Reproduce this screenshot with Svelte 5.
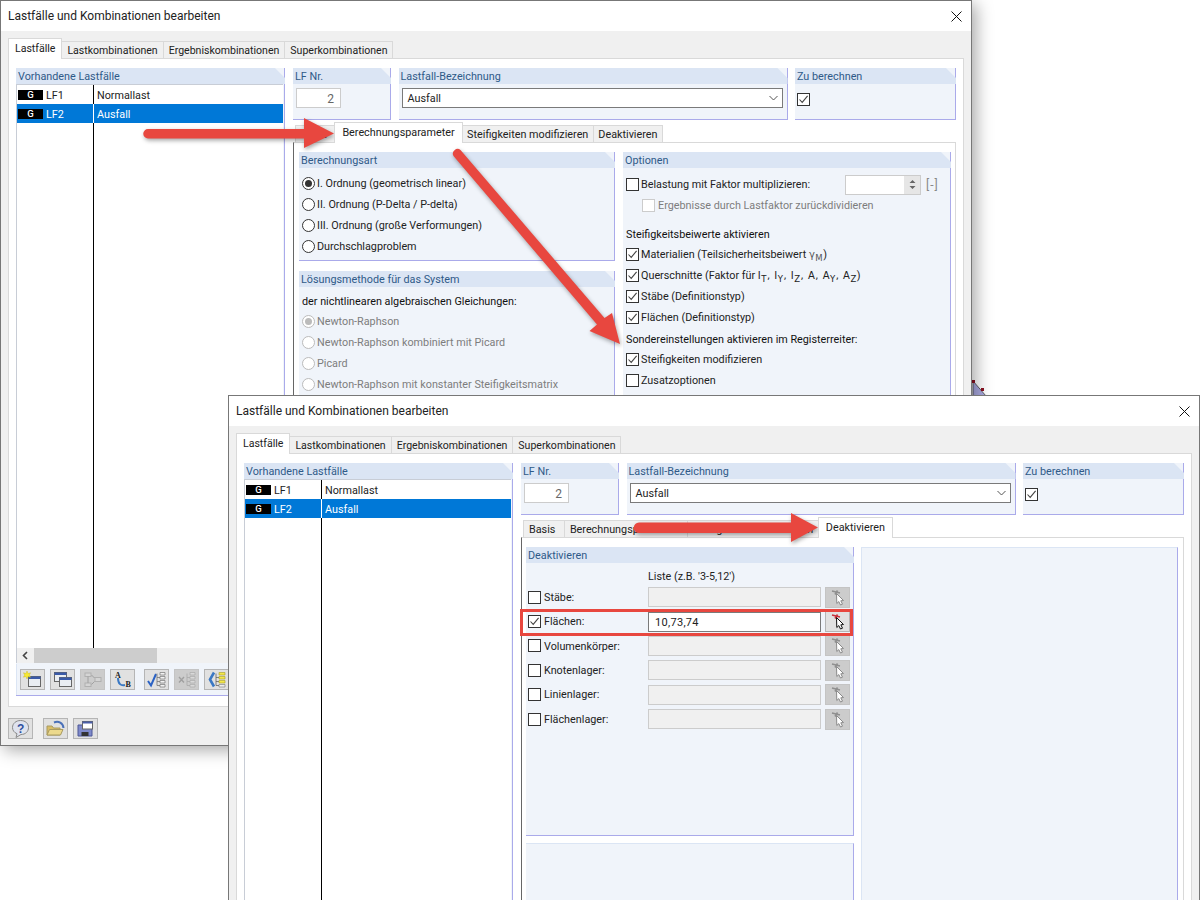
<script>
  const mainTabs = ['Lastfälle', 'Lastkombinationen', 'Ergebniskombinationen', 'Superkombinationen'];
  const subTabs = ['Basis', 'Berechnungsparameter', 'Steifigkeiten modifizieren', 'Deaktivieren'];
  const cases = [
    { id: 'LF1', name: 'Normallast', selected: false },
    { id: 'LF2', name: 'Ausfall', selected: true }
  ];
  const methods = ['I. Ordnung (geometrisch linear)', 'II. Ordnung (P-Delta / P-delta)', 'III. Ordnung (große Verformungen)', 'Durchschlagproblem'];
  const solvers = ['Newton-Raphson', 'Newton-Raphson kombiniert mit Picard', 'Picard', 'Newton-Raphson mit konstanter Steifigkeitsmatrix'];
  const deactivate = [
    { label: 'Stäbe:', on: false, value: '' },
    { label: 'Flächen:', on: true, value: '10,73,74' },
    { label: 'Volumenkörper:', on: false, value: '' },
    { label: 'Knotenlager:', on: false, value: '' },
    { label: 'Linienlager:', on: false, value: '' },
    { label: 'Flächenlager:', on: false, value: '' }
  ];
  const tools = [
    { icon: 'new' }, { icon: 'copy' }, { icon: 'flow', off: true }, { icon: 'ab' },
    { icon: 'check', gap: true }, { icon: 'cross', off: true }, { icon: 'bracket' }
  ];
  const footer = [{ icon: 'help' }, { icon: 'open', gap: true }, { icon: 'save' }];
</script>

{#snippet chk(on, off = false)}
  <span class="chk" class:off>
    {#if on}<svg viewBox="0 0 13 13" width="13" height="13"><path d="M2.5 6.5 5.2 9.4 10.6 2.8" fill="none" stroke="#444" stroke-width="1.1"/></svg>{/if}
  </span>
{/snippet}

{#snippet radio(on, off = false)}
  <span class="radio" class:off class:on></span>
{/snippet}

{#snippet icon(name)}
  <svg viewBox="0 0 25 21" width="25" height="21">
    {#if name === 'new'}
      <rect x="8.500" y="7.500" width="12" height="10" fill="#e9edf2" stroke="#666"/>
      <rect x="8.500" y="7.500" width="12" height="2.500" fill="#3a5aa8"/>
      <path d="M7 2 8 4.500 10.600 3.800 9.300 6 10.600 8.200 8 7.500 7 10 6 7.500 3.400 8.200 4.700 6 3.400 3.800 6 4.500Z" fill="#f7e92c" stroke="#c4b422" stroke-width=".4"/>
    {:else if name === 'copy'}
      <rect x="4.500" y="3.500" width="12" height="9" fill="#e9edf2" stroke="#666"/>
      <rect x="4.500" y="3.500" width="12" height="2.500" fill="#3a5aa8"/>
      <rect x="9.500" y="8.500" width="12" height="9" fill="#e9edf2" stroke="#666"/>
      <rect x="9.500" y="8.500" width="12" height="2.500" fill="#3a5aa8"/>
    {:else if name === 'flow'}
      <g fill="#d4d4d4" stroke="#b0b0b0">
        <rect x="5" y="4" width="6" height="3.500"/><rect x="5" y="14" width="6" height="3.500"/><rect x="15" y="8.500" width="6" height="4"/>
      </g>
      <path d="M8 7.500v6.500M11.500 6l3 3M11.500 15.500l3-3" stroke="#a0a0a0" fill="none"/>
    {:else if name === 'ab'}
      <text x="5" y="9" class="ico-t">A</text>
      <path d="M8 9c0 6 3 8 7 7" fill="none" stroke="#3a78c4" stroke-width="2"/>
      <text x="15.500" y="18" class="ico-t">B</text>
    {:else if name === 'check'}
      <path d="M4 12 7 16.500 12 5" fill="none" stroke="#2b62c4" stroke-width="2"/>
      <path d="M13 4.500v12h3M13 8.500h3M13 12.500h3" fill="none" stroke="#777" stroke-width=".8"/>
      <path d="M16 3.500h5v2.500h-5zM16 7.500h5v2.500h-5zM16 11.500h5v2.500h-5zM16 15.500h5v2.500h-5z" fill="#f3f3f3" stroke="#777" stroke-width=".7"/>
    {:else if name === 'cross'}
      <path d="M5 8 10 13.500M10 8 5 13.500" stroke="#a0a0a0" stroke-width="1.400"/>
      <path d="M13 4.500v12h3M13 8.500h3M13 12.500h3" fill="none" stroke="#aaa" stroke-width=".8"/>
      <path d="M16 3.500h5v2.500h-5zM16 7.500h5v2.500h-5zM16 11.500h5v2.500h-5zM16 15.500h5v2.500h-5z" fill="#d9d9d9" stroke="#aaa" stroke-width=".7"/>
    {:else if name === 'bracket'}
      <path d="M10 3.500 6 10.500 10 17.500" fill="none" stroke="#3a78c4" stroke-width="2.600"/>
      <path d="M12 4.500v12h3M12 8.500h3M12 12.500h3" fill="none" stroke="#666" stroke-width=".8"/>
      <path d="M15 3.500h6v2.500h-6zM15 7.500h6v2.500h-6zM15 11.500h6v2.500h-6z" fill="#f4e94a" stroke="#a79c2a" stroke-width=".6"/>
      <path d="M15 15.500h6v2.500h-6z" fill="#eee" stroke="#777" stroke-width=".6"/>
    {:else if name === 'help'}
      <path d="M12.500 2.500c5 0 8 3 8 7s-3 7-7.500 7l-5 3 1-3.800c-3-1.200-4.500-3.500-4.500-6.200 0-4 3.500-7 8-7Z" fill="#dfe3ee" stroke="#8a8a8a"/>
      <text x="9" y="14.500" class="ico-q">?</text>
    {:else if name === 'open'}
      <path d="M4 17V8h5l1.500 2H17v7Z" fill="#d8bd66" stroke="#a89a60"/>
      <path d="M4 17l2.500-5.500H20L17.500 17Z" fill="#ecd98c" stroke="#a89a60"/>
      <path d="M11 4.500c4.500-1.800 9 .5 9.500 5.500" fill="none" stroke="#4a70b8" stroke-width="2"/>
    {:else if name === 'save'}
      <path d="M5 7h14v11H5Z" fill="#7f8acb" stroke="#4d5796"/>
      <rect x="8.500" y="14" width="7" height="4" fill="#333"/>
      <rect x="9.500" y="3.500" width="10" height="7.500" fill="#fff" stroke="#666"/>
      <rect x="9.500" y="3.500" width="10" height="2" fill="#4a5ea8"/>
    {/if}
  </svg>
{/snippet}

{#snippet pick(active)}
  <span class="tool pick" class:off={!active}>
    <svg viewBox="0 0 25 21" width="25" height="21">
      <path d="M7 4 15 6M10 7.500 12.500 3.500" stroke={active ? '#c9303a' : '#8f8f8f'} stroke-width="1.600" fill="none"/>
      <path d="M11.500 6.500 18.500 13.500 15.800 13.800 17.500 17.200 15.500 18 13.800 14.600 11.800 16.500Z" fill="#fff" stroke={active ? '#111' : '#8a8a8a'}/>
    </svg>
  </span>
{/snippet}

{#snippet dialog(win, tab, pane, overlay)}
  <section class="window {win}">
    <header class="title">
      <span>Lastfälle und Kombinationen bearbeiten</span>
      <svg class="close" viewBox="0 0 11 11" width="11" height="11"><path d="M.5.5l10 10M10.500.5l-10 10" stroke="#111"/></svg>
    </header>
    <div class="body">
      <nav class="tabs main">
        {#each mainTabs as t, i}<span class="tab" class:active={i === 0}>{t}</span>{/each}
      </nav>
      <div class="sheet">
        <div class="group list-group">
          <h3>Vorhandene Lastfälle</h3>
          <div class="list">
            {#each cases as c}
              <div class="cell code" class:selected={c.selected}><b>G</b>{c.id}</div>
              <div class="cell name" class:selected={c.selected}>{c.name}</div>
            {/each}
          </div>
          {#if win === 'one'}
            <div class="hscroll"><svg viewBox="0 0 6 9" width="6" height="9"><path d="M5 1 1.500 4.500 5 8" fill="none" stroke="#444" stroke-width="1.600"/></svg><i></i></div>
            <div class="toolbar">
              {#each tools as t}<span class="tool" class:off={t.off} class:gap={t.gap}>{@render icon(t.icon)}</span>{/each}
            </div>
          {/if}
        </div>
        <div class="right">
          <div class="top-row">
            <div class="group nr">
              <h3>LF Nr.</h3>
              <span class="field nr-field">2</span>
            </div>
            <div class="group label">
              <h3>Lastfall-Bezeichnung</h3>
              <span class="field combo">Ausfall<svg viewBox="0 0 9 6" width="9" height="6"><path d="M.5 1 4.500 5 8.500 1" fill="none" stroke="#555"/></svg></span>
            </div>
            <div class="group calc">
              <h3>Zu berechnen</h3>
              <div class="calc-box">{@render chk(true)}</div>
            </div>
          </div>
          <nav class="tabs sub">
            {#each subTabs as t, i}<span class="tab" class:active={i === tab}>{t}</span>{/each}
          </nav>
          <div class="subsheet">{@render pane()}</div>
        </div>
      </div>
      {#if win === 'one'}
        <div class="footer">
          {#each footer as f}<span class="tool" class:gap={f.gap}>{@render icon(f.icon)}</span>{/each}
        </div>
      {/if}
    </div>
    {@render overlay()}
  </section>
{/snippet}

{#snippet paramsPane()}
  <div class="cols params">
    <div class="stack">
      <div class="group method">
        <h3>Berechnungsart</h3>
        <div class="rows">
          {#each methods as m, i}
            <div class="row">{@render radio(i === 0)}{m}</div>
          {/each}
        </div>
      </div>
      <div class="group solver">
        <h3>Lösungsmethode für das System</h3>
        <div class="rows">
          <div class="row plain lead">der nichtlinearen algebraischen Gleichungen:</div>
          {#each solvers as s, i}
            <div class="row dim">{@render radio(i === 0, true)}{s}</div>
          {/each}
        </div>
      </div>
    </div>
    <div class="group options">
      <h3>Optionen</h3>
      <div class="rows">
        <div class="row factor">
          {@render chk(false)}Belastung mit Faktor multiplizieren:
          <span class="spin"><i><svg viewBox="0 0 7 11" width="7" height="11"><path d="M3.500 1 6.500 4H.5ZM3.500 10 .5 7h6Z" fill="#666"/></svg></i></span>
          <span class="unit">[-]</span>
        </div>
        <div class="row dim indent">{@render chk(false, true)}Ergebnisse durch Lastfaktor zurückdividieren</div>
        <div class="row plain head-a">Steifigkeitsbeiwerte aktivieren</div>
        <div class="row">{@render chk(true)}<span>Materialien (Teilsicherheitsbeiwert <em class="greek">γ<sub>M</sub></em>)</span></div>
        <div class="row">{@render chk(true)}<span>Querschnitte (Faktor für <em>I<sub>T</sub>, I<sub>Y</sub>, I<sub>Z</sub>, A, A<sub>Y</sub>, A<sub>Z</sub></em>)</span></div>
        <div class="row">{@render chk(true)}Stäbe (Definitionstyp)</div>
        <div class="row">{@render chk(true)}Flächen (Definitionstyp)</div>
        <div class="row plain head-b">Sondereinstellungen aktivieren im Registerreiter:</div>
        <div class="row">{@render chk(true)}Steifigkeiten modifizieren</div>
        <div class="row">{@render chk(false)}Zusatzoptionen</div>
      </div>
    </div>
  </div>
{/snippet}

{#snippet deactivatePane()}
  <div class="cols deact">
    <div class="stack">
      <div class="group d-list">
        <h3>Deaktivieren</h3>
        <div class="d-head">Liste (z.B. '3-5,12')</div>
        {#each deactivate as d}
          <div class="d-row">
            {@render chk(d.on)}
            <span class="d-label">{d.label}</span>
            <span class="d-input" class:on={d.on}>{d.value}</span>
            {@render pick(d.on)}
          </div>
        {/each}
      </div>
      <div class="group d-extra"></div>
    </div>
    <div class="group d-side"></div>
  </div>
{/snippet}

{#snippet overlayOne()}
  <svg class="overlay" viewBox="0 0 972 746" width="972" height="746">
    <path class="arrow" d="M148 129H304V118L334 133.500 304 148V138.500H148a4.700 4.700 0 0 1 0-9.500Z"/>
    <path class="arrow" d="M453.500 156a4.700 4.700 0 0 1 7-6L604.500 318 612 313 620 344 589.500 331 597 324.500Z"/>
  </svg>
{/snippet}

{#snippet overlayTwo()}
  <svg class="overlay" viewBox="0 0 972 746" width="972" height="746">
    <rect x="293.500" y="215.500" width="330" height="24" fill="none" stroke="#e8473f" stroke-width="3"/>
    <path class="arrow" d="M411 127.500H563V118L590 132.500 563 147V138H411a5.250 5.250 0 0 1 0-10.500Z"/>
  </svg>
{/snippet}

<main class="desktop">
  <svg class="corner" viewBox="0 0 14 16" width="14" height="16">
    <path d="M1 1 14 16H1Z" fill="#a9a9e0" stroke="#444" stroke-width=".8"/>
    <rect y="0" width="3" height="3" fill="#8c1222"/><rect x="9" y="8" width="3" height="3" fill="#8c1222"/>
  </svg>
  {@render dialog('one', 1, paramsPane, overlayOne)}
  {@render dialog('two', 3, deactivatePane, overlayTwo)}
</main>

<style>
  :global(body) { margin: 0; background: #fff; }
  .desktop {
    position: relative;
    width: 1200px;
    height: 900px;
    overflow: hidden;
    font: 10.800px/1.2 Roboto, sans-serif;
    color: #222;
  }
  .corner { position: absolute; left: 972px; top: 380px; }
  .window {
    position: absolute;
    width: 972px;
    height: 746px;
    box-sizing: border-box;
    border: 1px solid #777;
    background: #fff;
    display: flex;
    flex-direction: column;
  }
  .window.one { left: 0; top: 0; box-shadow: 4px 4px 16px rgba(0, 0, 0, .35); }
  .window.two { left: 228px; top: 395px; }
  .overlay { position: absolute; left: -1px; top: -1px; pointer-events: none; }
  .arrow { fill: #e8473f; filter: drop-shadow(1px 2px 2px rgba(0, 0, 0, .35)); }

  .title {
    height: 30px;
    flex: none;
    display: flex;
    align-items: center;
    justify-content: space-between;
    padding: 0 9px 0 7px;
    font-size: 12px;
  }
  .body {
    flex: 1;
    display: flex;
    flex-direction: column;
    background: #f0f0f0;
    padding: 7px 7px 0;
    min-height: 0;
  }

  .tabs { display: flex; align-items: flex-end; }
  .tabs.main { height: 20px; font-size: 10.550px; }
  .tab {
    height: 17px;
    line-height: 18px;
    box-sizing: border-box;
    padding: 0 5px;
    border: 1px solid #d9d9d9;
    border-bottom: 0;
    margin-left: -1px;
    background: #f0f0f0;
    white-space: nowrap;
  }
  .tab:first-child { margin-left: 0; }
  .sub .tab { padding: 0 4.500px; }
  .sub .tab:first-child { padding: 0 9px 0 5px; }
  .one .sub .tab:first-child { padding-right: 7px; }
  .tab.active {
    height: 21px;
    line-height: 20px;
    background: #fff;
    position: relative;
    z-index: 1;
    margin-bottom: -1px;
  }
  .sub .tab.active { padding: 0 7px; }
  .main .tab.active { padding: 0 6px; }
  .sheet {
    height: 649px;
    box-sizing: border-box;
    background: #fff;
    border: 1px solid #d9d9d9;
    padding: 9px 7px 10px;
    display: grid;
    grid-template-columns: 269px 663px;
    gap: 8px;
  }

  .group {
    background: #f0f4fa;
    border-right: 1px solid #aaaaea;
    border-bottom: 1px solid #aaaaea;
    box-sizing: border-box;
  }
  .group h3 {
    margin: 0 -1px 0 0;
    height: 16px;
    line-height: 18px;
    padding-left: 2px;
    font-size: 10.800px;
    font-weight: 400;
    color: #2f5a88;
    background: #dbe5f4;
    clip-path: polygon(0 0, calc(100% - 10px) 0, 100% 10px, 100% 100%, 0 100%);
  }

  .list-group { display: flex; flex-direction: column; }
  .list {
    position: relative;
    flex: 1;
    display: grid;
    grid-template-columns: 76px 1fr;
    grid-auto-rows: 19px;
    background: #fff;
    border: 1px solid #c8cdd6;
    border-right: 0;
    border-bottom: 0;
    margin-right: 1px;
  }
  .list::before {
    content: "";
    position: absolute;
    left: 76px;
    top: 0;
    bottom: 0;
    width: 1px;
    background: #000;
  }
  .cell { display: flex; align-items: center; position: relative; box-sizing: border-box; padding-top: 3px; }
  .cell.selected { background: #0078d7; color: #fff; }
  .name { padding-left: 4px; }
  .name.selected { border-left: 1px solid #fff; padding-left: 3px; }
  .code { padding-left: 1px; }
  .code b {
    width: 25px;
    height: 10px;
    line-height: 10px;
    margin: -3px 3px 0 0;
    background: #000;
    color: #fff;
    font-size: 9.500px;
    font-weight: 500;
    text-align: center;
  }
  .hscroll {
    height: 15px;
    flex: none;
    display: flex;
    align-items: center;
    background: #f0f0f0;
    padding-left: 5px;
    border-left: 1px solid #c8cdd6;
    margin-right: 1px;
  }
  .hscroll i { width: 123px; height: 15px; margin-left: 6px; background: #cdcdcd; }
  .toolbar {
    height: 31px;
    flex: none;
    display: flex;
    gap: 5px;
    align-items: center;
    padding-left: 3px;
    margin-top: 1px;
    border-left: 1px solid #dbe5f4;
  }
  .tool {
    width: 25px;
    height: 21px;
    flex: none;
    box-sizing: border-box;
    border: 1px solid #b5b5b5;
    background: #e1e1e1;
    display: flex;
    align-items: center;
    justify-content: center;
  }
  .tool svg { margin: -1px; flex: none; }
  .tool.off { background: #ccc; border-color: #c4c4c4; }
  .tool.gap { margin-left: 4px; }
  .footer { display: flex; gap: 5px; padding-top: 11px; }
  .footer .tool.gap { margin-left: 5px; }
  .ico-t { font: 700 8px "Liberation Serif", serif; fill: #222; }
  .ico-q { font: 700 12px "Liberation Sans", sans-serif; fill: #2f4f9f; }

  .right { display: flex; flex-direction: column; min-width: 0; }
  .top-row { display: grid; grid-template-columns: 98px 389px 161px; gap: 7.500px; height: 46px; }
  .field {
    display: flex;
    align-items: center;
    box-sizing: border-box;
    height: 20px;
    background: #fff;
    margin: 4px 0 0 3px;
    padding-top: 2px;
  }
  .field svg { margin-top: -2px; }
  .nr-field {
    width: 45px;
    justify-content: flex-end;
    padding-right: 6px;
    border: 1px solid #ccc;
    color: #666;
    font-size: 12px;
  }
  .combo {
    width: 381px;
    justify-content: space-between;
    padding: 2px 4px 0 5px;
    border: 1px solid #7a7a7a;
  }
  .calc-box { padding: 9px 2px; }

  .tabs.sub { height: 21px; margin-top: 7px; padding-left: 2px; }
  .subsheet {
    flex: 1;
    background: #fff;
    border: 1px solid #d9d9d9;
    border-left-color: #666;
    padding: 9px 4px 9px 5px;
    box-sizing: border-box;
    min-height: 0;
  }
  .cols { display: grid; gap: 8px; height: 100%; }
  .cols.params { grid-template-columns: 316px 328px; }
  .cols.deact { grid-template-columns: 328px 317px; gap: 7px; margin-left: -1px; }
  .stack { display: flex; flex-direction: column; gap: 10px; min-height: 0; }

  .method { height: 109px; flex: none; }
  .solver { flex: 1; }
  .rows { padding: 4px 3px 0; display: flex; flex-direction: column; }
  .method .rows { padding-top: 4.500px; }
  .options .rows { padding-top: 5.500px; }
  .row {
    height: 21px;
    flex: none;
    box-sizing: border-box;
    padding-top: 2px;
    display: flex;
    align-items: center;
    gap: 2px;
    white-space: nowrap;
  }
  .row .chk, .row .radio { margin-top: -2px; }
  .row.plain { color: #111; }
  .row.lead { height: 20px; }
  .row.dim { color: #7d7d7d; }
  .row.indent { padding-left: 16px; gap: 3px; }
  .row.head-a { height: 19px; margin-top: 9px; }
  .row.head-b { height: 18px; margin-top: 3px; }
  .row em { font-style: normal; font-family: "DejaVu Sans", sans-serif; font-size: 10px; letter-spacing: .5px; }
  .row em.greek { color: #555; }
  .row sub { font-size: 8.500px; line-height: 0; }

  .chk, .radio {
    width: 13px;
    height: 13px;
    flex: none;
    box-sizing: border-box;
    border: 1px solid #333;
    background: #fff;
    display: inline-block;
  }
  .chk svg { display: block; margin: -1px; }
  .chk.off { border-color: #ccc; }
  .radio { border-radius: 50%; position: relative; }
  .radio.off { border-color: #bbb; }
  .radio.on::after {
    content: "";
    position: absolute;
    inset: 2px;
    border-radius: 50%;
    background: #333;
  }
  .radio.on.off::after { background: #bbb; }

  .factor { position: relative; }
  .spin {
    position: absolute;
    left: 219px;
    top: 1px;
    width: 76px;
    height: 20px;
    box-sizing: border-box;
    background: #fff;
    border: 1px solid #ccc;
    display: flex;
    justify-content: flex-end;
  }
  .spin i { width: 16px; background: #e6e6e6; display: flex; align-items: center; justify-content: center; }
  .unit { position: absolute; left: 300px; top: 4px; color: #888; font-size: 12px; letter-spacing: 1px; }

  .d-head { height: 16px; line-height: 16px; padding-left: 122px; margin-top: 6px; }
  .d-row {
    height: 24.400px;
    display: flex;
    align-items: center;
    padding-left: 2px;
  }
  .d-label { width: 107px; padding: 2px 0 0 3px; box-sizing: border-box; }
  .d-input {
    width: 173px;
    height: 20px;
    line-height: 20px;
    box-sizing: border-box;
    border: 1px solid #ccc;
    background: #f0f0f0;
    padding-left: 6px;
    letter-spacing: .3px;
    font-size: 11px;
    margin-right: 4px;
  }
  .d-input.on { background: #fff; border-color: #7a7a7a; }
  .d-list { height: 289px; flex: none; }
  .stack:has(.d-list) { gap: 7px; }
  .d-extra { flex: 1; border-top: 1px solid #dbe5f4; }
  .d-side { border-top: 1px solid #dbe5f4; border-left: 1px solid #dbe5f4; }
</style>
